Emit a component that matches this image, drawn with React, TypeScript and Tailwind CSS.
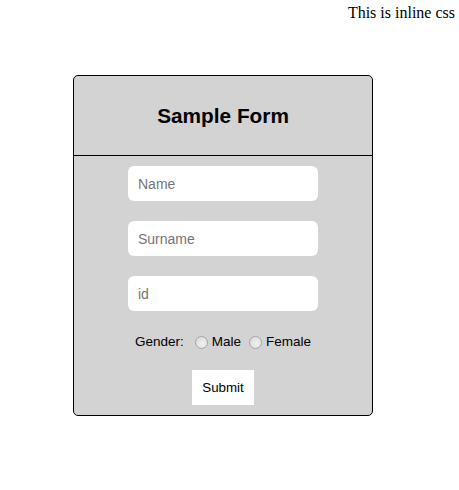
export default function App() {
  return (
    <div className="min-h-[490px] bg-white font-['Liberation_Sans',Arial,sans-serif]">
      <p className="pt-[4px] pr-[4px] text-right font-['Liberation_Serif','Times_New_Roman',serif] text-[16px] leading-[18px] text-black">
        This is inline css
      </p>

      <div className="ml-[73px] mt-[53px] w-[300px] rounded-[5px] border border-black bg-[#d3d3d3]">
        <div className="flex h-[80px] items-center justify-center border-b border-black">
          <h2 className="text-[20.8px] font-bold text-black">Sample Form</h2>
        </div>

        <form className="flex flex-col items-center pb-[10px] pt-[10px]">
          <div className="flex flex-col gap-[20px]">
            <input
              type="text"
              placeholder="Name"
              className="h-[35px] w-[190px] rounded-[6px] bg-white pl-[10px] text-[14px] outline-none placeholder:text-[#757575]"
            />
            <input
              type="text"
              placeholder="Surname"
              className="h-[35px] w-[190px] rounded-[6px] bg-white pl-[10px] text-[14px] outline-none placeholder:text-[#757575]"
            />
            <input
              type="text"
              placeholder="id"
              className="h-[35px] w-[190px] rounded-[6px] bg-white pl-[10px] text-[14px] outline-none placeholder:text-[#757575]"
            />
          </div>

          <div className="mt-[21px] flex h-[20px] items-center text-[13.5px] text-black">
            <span>Gender:</span>
            <input
              type="radio"
              name="gender"
              className="ml-[11px] h-[13px] w-[13px] appearance-none rounded-full border border-[#a6a6a6] bg-[radial-gradient(circle_at_60%_60%,#f0f0f0,#d8d8d8)]"
            />
            <span className="ml-[4px]">Male</span>
            <input
              type="radio"
              name="gender"
              className="ml-[8px] h-[13px] w-[13px] appearance-none rounded-full border border-[#a6a6a6] bg-[radial-gradient(circle_at_60%_60%,#f0f0f0,#d8d8d8)]"
            />
            <span className="ml-[4px]">Female</span>
          </div>

          <button
            type="button"
            className="mt-[18px] h-[35px] w-[62px] bg-white text-[13.33px] text-black"
          >
            Submit
          </button>
        </form>
      </div>
    </div>
  );
}
